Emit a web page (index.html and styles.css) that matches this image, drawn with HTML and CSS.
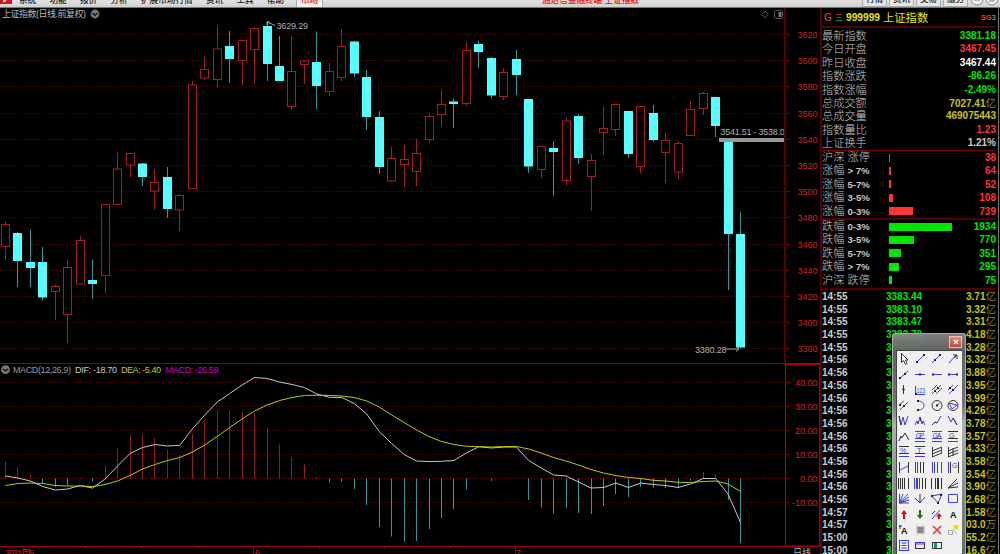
FILE: index.html
```
<!DOCTYPE html>
<html lang="zh-CN">
<head>
  <meta charset="UTF-8">
  <title>上证指数 - 日线</title>
  <link rel="stylesheet" href="styles.css">
</head>
<body>
  <header class="topbar">
    <span class="logo"><svg width="12" height="7" viewBox="0 0 12 7"><rect width="12" height="7" fill="#d8141c"/><path d="M3 5V0H9L5 5Z" fill="#fff"/></svg></span>
    <nav class="menu">
      <span>系统</span>
      <span>功能</span>
      <span>报价</span>
      <span>分析</span>
      <span>扩展市场行情</span>
      <span>资讯</span>
      <span>工具</span>
      <span>帮助</span>
    </nav>
    <span class="tab">市场</span>
    <span class="app-title">通达信金融终端 上证指数</span>
    <div class="tools">
      <span>行情</span>
      <span>资讯</span>
      <span>交易</span>
      <span>服务</span>
      <svg width="30" height="7" viewBox="0 0 30 7" fill="#ededed" stroke="#888"><circle cx="7" cy="-1" r="6"/><circle cx="22" cy="-1" r="6"/><path d="M4 0H10M19 1H24V-3"/></svg>
    </div>
  </header>

  <main class="layout">
    <svg id="chart" class="chart" width="820" height="546" viewBox="0 8 820 546"></svg>

    <aside class="panel">
      <div class="stock">
        <span class="g">G</span>
        <svg width="7" height="9" viewBox="0 0 7 9"><path d="M0 1.5H6M1 4.5H5" stroke="#b03030"/><path d="M0 7.5H6" stroke="#00a000"/></svg>
        <b>999999</b>
        <span class="name">上证指数</span>
        <span class="sg"><b>SG</b>3</span>
      </div>
      <div class="quotes">
        <div class="row"><span>最新指数</span><b class="down">3381.18</b></div>
        <div class="row"><span>今日开盘</span><b class="up">3467.45</b></div>
        <div class="row"><span>昨日收盘</span><b class="flat">3467.44</b></div>
        <div class="row"><span>指数涨跌</span><b class="down">-86.26</b></div>
        <div class="row"><span>指数涨幅</span><b class="down">-2.49%</b></div>
        <div class="row"><span>总成交额</span><b class="vol">7027.41<i>亿</i></b></div>
        <div class="row"><span>总成交量</span><b class="vol">469075443</b></div>
        <div class="row"><span>指数量比</span><b class="up">1.23</b></div>
        <div class="row"><span>上证换手</span><b class="rate">1.21%</b></div>
      </div>
      <div class="stats" id="rise"></div>
      <div class="stats" id="fall"></div>
      <div class="ticks" id="ticks"></div>
    </aside>
  </main>

  <div class="palette">
    <div class="palette-title"><span class="close"><svg width="6" height="6" viewBox="0 0 6 6"><path d="M1 1L5 5M5 1L1 5" stroke="#fff" stroke-width="1.6"/></svg></span></div>
    <div class="palette-body" id="icons"></div>
  </div>

  <script src="script.js"></script>
</body>
</html>
```
FILE: styles.css
```
* {
  box-sizing: border-box;
}
body {
  margin: 0;
  width: 1000px;
  height: 554px;
  overflow: hidden;
  position: relative;
  background-color: #000;
  color: #c8c8c8;
  font-family: "Liberation Sans", "Noto Sans CJK SC", sans-serif;
}
.topbar {
  display: flex;
  align-items: flex-end;
  height: 8px;
  overflow: hidden;
  background: linear-gradient(#e2e2e2, #d0d0d0);
  border-bottom: 1px solid #777;
  color: #222;
  font-size: 8.6px;
  font-weight: 500;
  line-height: 9px;
  white-space: nowrap;
}
.logo {
  display: flex;
  width: 19px;
  padding-bottom: 3px;
}
.menu {
  display: flex;
  gap: 13.3px;
  padding-bottom: 2.5px;
  width: 277px;
}
.tab {
  width: 27px;
  padding-bottom: 2.5px;
  text-align: center;
  color: #f00;
  background-color: #f2f2f2;
  border-left: 1px solid #aaa;
  border-right: 1px solid #aaa;
}
.app-title {
  margin-left: 219px;
  padding-bottom: 2.5px;
  color: #f00;
}
.tools {
  display: flex;
  align-items: flex-end;
  margin-left: auto;
  gap: 2px;
}
.tools span {
  width: 25px;
  padding-bottom: 2px;
  text-align: center;
  background-color: #e4e4e4;
  border: 1px solid #aaa;
  border-top: none;
}
.layout {
  display: flex;
  height: 546px;
}
.chart {
  flex: none;
  display: block;
}
.chart text {
  font-size: 9px;
}
.chart .axis {
  fill: #d02424;
}
.chart .note {
  fill: #b0b0b0;
}
.panel {
  width: 179px;
  height: 546px;
  overflow: hidden;
  padding-right: 2px;
  border-left: 2px solid #500;
  border-right: 1px solid #777;
  font-size: 10px;
}
.stock {
  display: flex;
  align-items: center;
  height: 20px;
  border-bottom: 2px solid #500;
  color: #e8e800;
}
.stock .g {
  width: 14px;
  padding-left: 2px;
  color: #ff4040;
}
.stock > b {
  margin-left: 3px;
  font-size: 10.2px;
}
.stock .name {
  margin-left: 3px;
  font-size: 11.3px;
}
.stock .sg {
  margin-left: auto;
  font-size: 8px;
  color: #aaa;
}
.stock .sg b {
  color: #ff3030;
  font-size: 7.5px;
}
.quotes {
  height: 123px;
  padding-top: 1px;
  border-bottom: 1px solid #700;
}
.row {
  display: flex;
  justify-content: space-between;
  height: 13.4px;
  line-height: 14px;
}
.row span {
  font-size: 11.2px;
  font-weight: 300;
}
.row i {
  font-style: normal;
  font-weight: 300;
  font-size: 10.5px;
}
.up {
  color: #ff3535;
}
.down {
  color: #00e600;
}
.flat {
  color: #fff;
}
.vol {
  color: #c8c800;
}
.rate {
  color: #ccc;
}
.stats {
  height: 69px;
  border-bottom: 2px solid #500;
}
#fall {
  height: 70px;
}
.stat {
  display: grid;
  grid-template-columns: 67px 1fr auto;
  align-items: center;
  height: 13.4px;
  line-height: 13.4px;
}
.stat .label {
  font-size: 11.2px;
  font-weight: 300;
  color: #c8c8c8;
}
.stat .label b {
  font-size: 9.6px;
  font-weight: bold;
}
.bar {
  height: 8px;
  background-color: currentColor;
}
.ticks div {
  display: grid;
  grid-template-columns: 64px 1fr auto;
  height: 12.7px;
  line-height: 13px;
  font-weight: bold;
}
.ticks i {
  font-style: normal;
  font-weight: 300;
  font-size: 10.5px;
}
.palette {
  position: absolute;
  left: 892px;
  top: 333px;
  width: 74px;
  height: 221px;
  padding: 0 3px;
  background: linear-gradient(rgba(150, 150, 150, 0.85), rgba(105, 105, 105, 0.93) 16px, #747474 70px, #b0b0b0 90px, #666);
  backdrop-filter: blur(3px);
  border: 1px solid #aaa;
  border-bottom: none;
  border-radius: 3px 3px 0 0;
}
.palette-title {
  display: flex;
  justify-content: flex-end;
  height: 16px;
  padding-top: 2px;
}
.close {
  display: flex;
  align-items: center;
  justify-content: center;
  width: 13px;
  height: 12px;
  background: linear-gradient(#e0917c, #c0422a);
  border: 1px solid #f0c0b0;
}
.palette-body {
  display: grid;
  grid-template-columns: repeat(4, 16.3px);
  grid-auto-rows: 15.57px;
  height: 205px;
  background-color: #f0f0f0;
  border-top: 1px solid #444;
  border-left: 1px solid #444;
  overflow: hidden;
}
.palette-body svg {
  display: block;
  fill: none;
  stroke-width: 1;
}
.palette-body .b {
  stroke: #3a3af0;
}
.palette-body .k {
  stroke: #333;
}
.palette-body .n {
  stroke: none;
  fill: #222;
}
.palette-body text {
  fill: #3a3af0;
  font-size: 7px;
}
.palette-body .letter {
  fill: #111;
  font-size: 9px;
  font-weight: bold;
}
```
FILE: script.js
```
// [type, high, body top, body bottom, low]
const candles = [
  ['r',221,224.5,246.5,260],['c',232,233,261,287],['c',229.5,262,268,287],['c',247,262,297.5,300.5],
  ['r',284.5,286.5,291.5,320],['r',260,267.5,314.5,343],['r',236.5,240.5,284,284.5],['c',259.5,280,284,298.5],
  ['r',204,204.5,275.5,293],['r',152.5,169,204.5,205],['r',153,153.5,165,177],['c',163,163.5,177,186],
  ['r',169,182.5,191,209.5],['c',167,177,209,218],['r',194,195.5,210,231],['r',81,85,188.5,189],
  ['r',56,69.5,78,80],['r',26,49,79.5,87],['c',31,46,59,83],['r',40,40.5,60.5,85],
  ['r',27,28.5,49.5,84],['c',22,26,64,81],['c',36,66,81,81],['r',36,71.5,106.5,110],
  ['r',60,61,64.5,84],['c',31.5,62,86,109],['r',63,71.5,91.5,96],['r',29,46.5,77.5,81],
  ['c',41,41.5,73.5,77],['c',70,77,117,130],['c',111,117,167,174],['r',147,158.5,181,182],
  ['r',145,159.5,164.5,187],['r',139,153.5,171.5,186],['r',113,116.5,139.5,143],['r',90,104.5,114.5,126],
  ['c',98.5,101.5,104,128],['r',42,50.5,103.5,106],['c',41,44,52,68],['c',57,58,95.5,98.5],
  ['r',68,72.5,96.5,100],['c',50,59,75,95],['c',99,99,166.5,173],['r',146,146.5,169.5,178],
  ['c',141,148,152,196],['r',117,121,180.5,185],['c',114,116,158,164],['r',154,160.5,176.5,211],
  ['r',106,128.5,132.5,155],['r',104,104.5,129.5,136],['c',111,111,154,158],['r',106,106.5,166.5,173],
  ['c',105,113,140,142],['r',133,140.5,152.5,183],['r',141,143.5,172,179],['r',101,109.5,135.5,136],
  ['r',92,93.5,108.5,115],['c',97,97,126,137],['c',142,142,234,290],['c',212,234,347.5,348.5]
];
const macd = [461,467,474,484,487,485.5,477.5,481.5,466,448,435.5,434.5,438.5,449.5,455,434,420,410,411,411.5,
  413,428,444.5,457,464.5,477,482.5,481.5,489,505,527,536.5,541.5,541,529,518,509,489.5,478.5,481,
  478.5,478,500,507.5,513.5,508,513,514,506,494,497,487,488,488,488,480.5,472,474,500,543];
const dif = [476,478,481,486.5,490,489,485.5,488,479,466,453.5,447.5,444.5,446,445.3,429,415,402,393.5,385,
  377.5,378.5,382,384.5,387.5,394,397.3,397.5,403.5,414,431.5,443.5,454.5,461,461.5,461.3,460.5,453,446.7,448,
  447,447,460.5,468,475,476,482,488,487.5,483,487.5,483,484.5,485.5,487.5,484,478.5,478.5,494,522.5];
const dea = [485.5,483.5,483,483.5,485.5,486,486,486.5,484.5,481,475.5,469,464.5,460.5,457.5,452,445,436.5,427.5,419,
  411,405,400.5,397.5,395.5,395.2,395.4,396,397.5,401,407,415,422.5,430,436.5,441.5,444.5,446.3,446.7,447,
  446.7,446.5,449,453,457.5,461,465,469.5,473,475.5,477.5,478.5,480.3,481,482.3,482.5,481.5,481,484,491.5];

const xAt = i => 5.4 + i * 12.46;
const line = (x1, y1, x2, y2, color, extra = '') =>
  `<line x1="${x1}" y1="${y1}" x2="${x2}" y2="${y2}" stroke="${color}" ${extra}/>`;

function drawChart() {
  let s = '';
  const dots = 'stroke-dasharray="1 2"';

  // price grid and axis
  for (let i = 0; i <= 12; i++) {
    const y = Math.floor(34.5 + i * 26.2) + 0.5;
    s += line(0, y, 784, y, '#700000', dots);
    s += line(785, y, 789, y, '#900');
    if (i < 12) s += line(785, y + 13, 787, y + 13, '#700');
    s += `<text class="axis" x="797.5" y="${y + 3.3}">${3620 - i * 20}</text>`;
  }
  // indicator grid
  for (let i = 0; i <= 5; i++) {
    const y = Math.floor(382.4 + i * 24.05) + 0.5;
    s += line(0, y, 784, y, i === 4 ? '#a00000' : '#700000', dots);
    s += line(785, y, 789, y, '#900');
    if (i < 5) s += line(785, y + 12, 787, y + 12, '#700');
    s += `<text class="axis" x="817.5" y="${y + 3.3}" text-anchor="end">${(40 - i * 10).toFixed(2)}</text>`;
  }
  s += line(785, 8, 785, 363, '#580000', 'stroke-width="2"');
  s += line(0, 363.5, 820, 363.5, '#900');
  s += line(0, 546.5, 820, 546.5, '#900');

  candles.forEach(([type, high, top, bottom, low], i) => {
    const x = Math.round(xAt(i) - 0.5) + 0.5;
    if (type === 'c') {
      s += line(x, high, x, low, '#2f9c9c');
      s += `<rect x="${x - 4.5}" y="${top}" width="9" height="${bottom - top}" fill="#54ffff"/>`;
    } else {
      s += line(x, high, x, top, '#a81e1e') + line(x, bottom, x, low, '#a81e1e');
      s += `<rect x="${x - 4}" y="${top}" width="8" height="${bottom - top}" fill="#000" stroke="#a81e1e"/>`;
    }
    const m = macd[i];
    if (m !== 478.5) s += line(x, 478.5, x, m, m < 478.5 ? '#981c1c' : '#2f9c9c');
  });

  const points = arr => arr.map((y, i) => xAt(i).toFixed(1) + ',' + y).join(' ');
  s += `<polyline points="${points(dif)}" fill="none" stroke="#c8c8c8"/>`;
  s += `<polyline points="${points(dea)}" fill="none" stroke="#c8c800"/>`;

  // titles
  const toggle = (x, y) => `<circle cx="${x}" cy="${y}" r="4.4" fill="#777"/><path d="M${x - 2.4} ${y - 1}l2.4 2.4l2.4 -2.4" fill="none" stroke="#111" stroke-width="1.3"/>`;
  s += '<text x="2" y="17.3" fill="#b8b8b8" textLength="84">上证指数(日线.前复权)</text>' + toggle(95, 14);
  s += toggle(5.5, 369.7);
  s += '<text x="13" y="373" fill="#999" textLength="58">MACD(12,26,9)</text>';
  s += '<text x="75" y="373" fill="#ccc" textLength="42">DIF: -18.70</text>';
  s += '<text x="121" y="373" fill="#c8c800" textLength="40">DEA: -5.40</text>';
  s += '<text x="165.5" y="373" fill="#d000d0" textLength="53">MACD: -26.59</text>';
  s += '<path d="M765 11L768.5 14.5L765 18L761.5 14.5Z" fill="none" stroke="#555"/>';
  s += '<rect x="774.5" y="10.5" width="8" height="8" rx="1" fill="none" stroke="#555"/><rect x="778.5" y="12" width="3" height="5" fill="#777"/>';

  // price notes and the gap band
  s += '<text class="note" x="276.5" y="29.3" textLength="31.5">3629.29</text>';
  s += '<path d="M275 25.5L267 22M267 25V22H270" fill="none" stroke="#aaa"/>';
  s += '<text class="note" x="695" y="353" textLength="31.5">3380.28</text>';
  s += '<path d="M726 349H739M736 346.5L739 349L736 351.5" fill="none" stroke="#aaa"/>';
  s += '<svg x="719" y="124" width="65" height="20"><text class="note" x="1.5" y="11" textLength="69">3541.51 - 3538.04</text></svg>';
  s += '<rect x="719" y="138" width="65" height="4" fill="#999"/>';

  // time axis
  [85.5, 141.5, 198.5, 319.5, 384.5, 450.5].forEach(x => s += line(x, 547, x, 548.5, '#900'));
  [29.5, 253.5, 515.5].forEach(x => s += line(x, 547, x, 554, '#900'));
  s += '<text class="axis" x="5" y="556" textLength="29">2021年5</text><text class="axis" x="255" y="556">6</text><text class="axis" x="516" y="556">7</text>';
  s += '<text x="793" y="555.5" fill="#b0b0b0">日线</text>';
  s += '<rect x="785.5" y="364.5" width="34" height="181.5" fill="none" stroke="#b80000"/>';
  document.getElementById('chart').innerHTML = s;
}

function drawStats(id, cls, rows) {
  document.getElementById(id).innerHTML = rows.map(([label, range, width, count]) => `
    <div class="stat ${cls}">
      <span class="label">${label} ${range}</span>
      <div class="bar" style="width:${width}px"></div>
      <b>${count}</b>
    </div>`).join('');
}

function drawTicks() {
  const amounts = ['3.71','3.32','3.31','4.18','3.28','3.32','3.88','3.95','3.99','4.26','3.78','3.57','4.33','3.58','3.54','3.90','2.68','1.58','03.0','55.2','16.6'];
  const prices = ['3383.44','3383.10','3383.47','3382.70','3382.70'];
  document.getElementById('ticks').innerHTML = amounts.map((a, i) => {
    const time = i < 5 ? '14:55' : i < 17 ? '14:56' : i < 19 ? '14:57' : '15:00';
    return `<div><span class="rate">${time}</span><span class="down">${prices[i] || '3'}</span><span class="vol">${a}<i>${i === 18 ? '万' : '亿'}</i></span></div>`;
  }).join('');
}

// drawing tools, in 16x15 cells
const p = (cls, d) => `<path class="${cls}" d="${d}"/>`;
const dot = (x, y) => `<rect class="n" x="${x - 1}" y="${y - 1}" width="2" height="2"/>`;
const icons = [
  '<path d="M5.5 2.5V11.5L7.5 9.5L9.5 13.5L11 12.5L9.5 9H12Z" fill="#fff" stroke="#333"/>',
  p('b', 'M4 12L12 4') + dot(5, 11) + dot(12, 4),
  p('b', 'M3 12L12 3') + dot(6, 9) + dot(11, 4),
  p('b', 'M4 12L11 4') + p('k', 'M8 4H12V8M12 4L9 7'),
  p('b', 'M3 12L12 4') + dot(4, 11) + dot(9, 7),
  p('b', 'M3 7.5H13') + dot(8, 7.5),
  p('b', 'M3 7.5H13') + dot(4, 7.5),
  p('b', 'M4 7.5H12') + dot(4, 7.5) + dot(12, 7.5),
  p('k', 'M7.5 3V12') + dot(7.5, 7.5),
  p('b', 'M3.5 4V12.5H13') + '<text x="4.5" y="10.5" textLength="8.5" lengthAdjust="spacingAndGlyphs">123</text>' + dot(4, 12),
  p('b', 'M3 8L8 3M3 12L12 3M7 12L13 6') + dot(6, 9) + dot(9, 6),
  p('b', 'M3 8L8 3M4 12L13 3') + dot(5, 6) + dot(8, 8),
  p('b', 'M3 7L8 3M4 12L12 4') + dot(4, 7) + dot(8, 8),
  p('b', 'M6 3C14 3 14 12 6 12') + dot(6, 3) + dot(6, 12),
  '<circle class="k" cx="8" cy="7.5" r="5"/>' + p('b', 'M8 7.5L11 4.5') + dot(8, 7.5),
  '<circle class="k" cx="8" cy="7.5" r="5"/>' + p('b', 'M4 5L12 7L7 11Z'),
  p('b', 'M3 3L5 12L7 4L9 12L12 3') + p('k', 'M3 3L5 12'),
  p('b', 'M3 12L5 8L6 11L8 4L10 11L11 8L13 12') + p('k', 'M8 4L9 8'),
  p('b', 'M3 12L6 9L8 10L12 3') + p('k', 'M3 12L6 9L8 10'),
  p('b', 'M3 3L6 9L8 5L12 12') + p('k', 'M8 5L12 12'),
  p('k', 'M3 12L5 7L6 9L9 4L13 11') + p('b', 'M3 12L5 7'),
  p('b', 'M3 2.5H13M3 12.5H13M3 9.5H13') + '<text x="3.5" y="8.7" textLength="9">GP</text>',
  p('b', 'M3 2.5H13M3 12.5H13M3 9.5H13') + '<text x="3.5" y="8.7" textLength="9">GA</text>',
  p('k', 'M3 2.5H13M3 9.5H13') + p('b', 'M3 12.5H13') + '<text x="4" y="8.7">G</text>',
  p('k', 'M3 2.5H13M3 9.5H13') + p('b', 'M3 12.5H13') + '<text x="4" y="8.7">%</text>',
  p('k', 'M3 2.5H13M3 9.5H13') + p('b', 'M3 12.5H13') + '<text x="5" y="8.7">T</text>',
  p('k', 'M3.5 3V13M3 7L13 3M3 10L13 6M3 13L13 9') + p('b', 'M12.5 3V10'),
  p('k', 'M3.5 3V13M3 7L13 3M3 10L13 6M3 13L13 9M8 4V12'),
  p('k', 'M3.5 2V13M12.5 2V13') + p('b', 'M4 10L12 6'),
  p('b', 'M3.5 2V13M5.5 2V13') + p('k', 'M8.5 2V13M11.5 2V13'),
  p('b', 'M3.5 2V13M5.5 2V13M8.5 2V13M12.5 2V13'),
  p('b', 'M3.5 2V13') + p('k', 'M5.5 2V13M13.5 2V13') + '<text x="7" y="8">G</text>',
  p('k', 'M2.5 2V13M4.5 2V13M6.5 2V13M8.5 2V13M12.5 2V13'),
  p('b', 'M2.5 2V13M4.5 2V13M5.5 2V13M7.5 2V13') + p('k', 'M10.5 2V13M13.5 2V13'),
  p('k', 'M2.5 2V13M6.5 2V13M8.5 2V13M9.5 2V13M12.5 2V13'),
  p('k', 'M3 12L12 3M3 12L13 7M3 12L13 11'),
  p('b', 'M3.5 3V12H13M3.5 12L7 3M3.5 12L12 3M3.5 12L13 6') + p('k', 'M3.5 12L13 9'),
  p('k', 'M8 3V12M8 12L3 7') + p('b', 'M8 12L13 6'),
  p('b', 'M3 5L13 3L9 12Z') + dot(3, 5) + dot(12, 4) + dot(9, 12),
  p('b', 'M3.5 3.5H12.5V11.5H3.5Z'),
  '<path d="M8 3L11 7H9V12H7V7H5Z" fill="#f00000"/>',
  '<path d="M8 12L11 8H9V3H7V8H5Z" fill="#008000"/>',
  p('b', 'M3 12L11 3') + p('k', 'M3 7L6 4') + '<path d="M10 6L13 9.5H11V12H9V9.5H7Z" fill="#e01010"/>',
  '<text class="letter" x="5" y="11">A</text>',
  p('k', 'M3 4L6 4M4 3V7') + '<text class="letter" x="5" y="12">A</text>',
  '<rect x="4" y="3.5" width="9" height="9" fill="#ccc"/><rect x="5.5" y="5" width="6" height="6" fill="#888"/>',
  '<path d="M4 4L12 12M12 4L4 12" stroke="#e83030" stroke-width="1.5"/>',
  '<path d="M3.5 8.5H7.5V12.5H3.5ZM8 8L10 6M9 9L12 12" stroke="#aaa"/><circle cx="11" cy="5" r="2.5" fill="#f0e000"/>',
  '<rect class="b" x="3.5" y="2.5" width="9" height="10"/>' + p('b', 'M5.5 5H10.5M5.5 7.5H10.5M5.5 10H10.5'),
  '<rect class="k" x="3.5" y="4.5" width="9" height="6"/>' + p('b', 'M3 4.5H13M3 6H13'),
  '<rect class="k" x="3.5" y="4.5" width="9" height="6"/><rect x="5" y="5" width="3" height="5" fill="#109070"/>'
];

drawChart();
drawStats('rise', 'up', [
  ['沪深', '涨停', 0.8, 38], ['涨幅', '<b>&gt; 7%</b>', 2, 64], ['涨幅', '<b>5-7%</b>', 2, 52],
  ['涨幅', '<b>3-5%</b>', 3.7, 108], ['涨幅', '<b>0-3%</b>', 24, 739]
]);
drawStats('fall', 'down', [
  ['跌幅', '<b>0-3%</b>', 62.5, 1934], ['跌幅', '<b>3-5%</b>', 25, 770], ['跌幅', '<b>5-7%</b>', 12, 351],
  ['跌幅', '<b>&gt; 7%</b>', 10.3, 295], ['沪深', '跌停', 3, 75]
]);
drawTicks();
document.getElementById('icons').innerHTML = icons.map(i => `<svg width="16" height="15" viewBox="1 0 16 15">${i}</svg>`).join('');
```
